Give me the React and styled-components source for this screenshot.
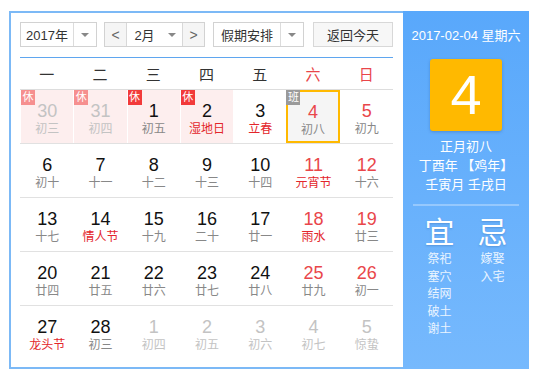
import React from "react";
import styled, { createGlobalStyle } from "styled-components";

const GlobalStyle = createGlobalStyle`
  body {
    margin: 0;
    background: #fff;
    font-family: "Liberation Sans", "Noto Sans CJK SC", sans-serif;
  }
`;

const Frame = styled.div`
  margin: 11px 0 0 9px;
  width: 520px;
  height: 358px;
  box-sizing: border-box;
  border: 2px solid #7cb9f6;
  border-right: none;
  display: flex;
`;

const Main = styled.div`
  width: 392px;
  box-sizing: border-box;
  padding: 9px 10px 0 9px;
  background: #fff;
`;

const Toolbar = styled.div`
  display: flex;
  height: 25px;
  padding-bottom: 10px;
  border-bottom: 1px solid #5fa6ef;
`;

const Select = styled.div`
  display: flex;
  width: ${({ w }) => w}px;
  margin-right: ${({ gap }) => gap || 0}px;
  box-sizing: border-box;
  border: 1px solid #d2d2d2;
  background: #fff;
  font-size: 13px;
  color: #333;
`;

const SelectText = styled.div`
  flex: 1;
  display: flex;
  align-items: center;
  justify-content: center;
`;

const Arrow = styled.div`
  width: 22px;
  border-left: 1px solid #dcdcdc;
  display: flex;
  align-items: center;
  justify-content: center;
  &::after {
    content: "";
    border-left: 4px solid transparent;
    border-right: 4px solid transparent;
    border-top: 4px solid #888;
  }
`;

const Group = styled.div`
  display: flex;
  width: 101px;
  margin-right: 8px;
  box-sizing: border-box;
  border: 1px solid #d2d2d2;
  font-size: 13px;
  color: #333;
`;

const Step = styled.div`
  width: 21px;
  background: #f5f5f5;
  display: flex;
  align-items: center;
  justify-content: center;
  color: #666;
  font-size: 14px;
  ${({ side }) => (side === "l" ? "border-right" : "border-left")}: 1px solid #d8d8d8;
`;

const MonthBox = styled.div`
  flex: 1;
  display: flex;
  background: #fff;
`;

const MonthArrow = styled(Arrow)`
  border-left: none;
  width: 20px;
`;

const TodayBtn = styled.div`
  width: 80px;
  box-sizing: border-box;
  border: 1px solid #d8d8d8;
  background: #f7f7f7;
  display: flex;
  align-items: center;
  justify-content: center;
  font-size: 13px;
  color: #333;
`;

const Head = styled.div`
  display: grid;
  grid-template-columns: repeat(7, 1fr);
  height: 31px;
  border-bottom: 1px solid #ddd;
`;

const HeadCell = styled.div`
  display: flex;
  align-items: center;
  justify-content: center;
  font-size: 15px;
  color: ${({ red }) => (red ? "#e9464a" : "#333")};
`;

const Week = styled.div`
  display: grid;
  grid-template-columns: repeat(7, 1fr);
  height: 53px;
  border-bottom: ${({ last }) => (last ? "none" : "1px solid #e1e1e1")};
`;

const Cell = styled.div`
  position: relative;
  box-sizing: border-box;
  border-left: 1px solid #fff;
  padding-top: ${({ today }) => (today ? 10 : 11)}px;
  text-align: center;
  background: ${({ rest, today }) => (today ? "#f5f5f5" : rest ? "#fdeeee" : "#fff")};
  border: ${({ today }) => (today ? "2px solid #ffb900" : "")};
`;

const Num = styled.div`
  font-size: 18px;
  line-height: 20px;
  color: ${({ c }) => c};
`;

const Lunar = styled.div`
  font-size: 12px;
  line-height: 16px;
  color: ${({ c }) => c};
`;

const Badge = styled.span`
  position: absolute;
  top: ${({ inset }) => (inset ? -2 : 0)}px;
  left: ${({ inset }) => (inset ? -2 : 0)}px;
  width: 14px;
  height: 15px;
  line-height: 15px;
  font-size: 11px;
  color: #fff;
  text-align: center;
  background: ${({ bg }) => bg};
`;

const Side = styled.div`
  width: 126px;
  margin: -2px 0;
  background: linear-gradient(#59a8fb, #76b9fd);
  color: #fff;
  display: flex;
  flex-direction: column;
  align-items: center;
  padding-top: 16px;
  font-family: "Liberation Sans", "Noto Sans CJK SC", sans-serif;
`;

const DateLine = styled.div`
  font-size: 13px;
  line-height: 18px;
`;

const DayBox = styled.div`
  width: 72px;
  height: 72px;
  margin-top: 14px;
  border-radius: 3px;
  background: #ffb900;
  box-shadow: 0 1px 3px rgba(40, 80, 140, 0.35);
  display: flex;
  align-items: center;
  justify-content: center;
  font-size: 56px;
  line-height: 1;
`;

const LunarInfo = styled.div`
  margin-top: 6px;
  font-size: 13px;
  line-height: 19px;
  text-align: center;
`;

const Divider = styled.div`
  align-self: stretch;
  margin: 10px 10px 0;
  height: 2px;
  background: rgba(255, 255, 255, 0.3);
`;

const Advice = styled.div`
  display: flex;
  gap: 13px;
  margin-top: 9px;
`;

const AdviceCol = styled.div`
  width: 40px;
  display: flex;
  flex-direction: column;
  align-items: center;
`;

const AdviceTitle = styled.div`
  font-size: 30px;
  line-height: 36px;
  text-shadow: 0 1px 2px rgba(30, 80, 150, 0.3);
`;

const AdviceItem = styled.div`
  font-size: 12px;
  line-height: 17.5px;
  color: #eaf4ff;
`;

const weeks = [
  [
    { n: 30, l: "初三", o: 1, b: "休" },
    { n: 31, l: "初四", o: 1, b: "休" },
    { n: 1, l: "初五", b: "休" },
    { n: 2, l: "湿地日", f: 1, b: "休" },
    { n: 3, l: "立春", f: 1 },
    { n: 4, l: "初八", t: 1, b: "班" },
    { n: 5, l: "初九" },
  ],
  [
    { n: 6, l: "初十" },
    { n: 7, l: "十一" },
    { n: 8, l: "十二" },
    { n: 9, l: "十三" },
    { n: 10, l: "十四" },
    { n: 11, l: "元宵节", f: 1 },
    { n: 12, l: "十六" },
  ],
  [
    { n: 13, l: "十七" },
    { n: 14, l: "情人节", f: 1 },
    { n: 15, l: "十九" },
    { n: 16, l: "二十" },
    { n: 17, l: "廿一" },
    { n: 18, l: "雨水", f: 1 },
    { n: 19, l: "廿三" },
  ],
  [
    { n: 20, l: "廿四" },
    { n: 21, l: "廿五" },
    { n: 22, l: "廿六" },
    { n: 23, l: "廿七" },
    { n: 24, l: "廿八" },
    { n: 25, l: "廿九" },
    { n: 26, l: "初一" },
  ],
  [
    { n: 27, l: "龙头节", f: 1 },
    { n: 28, l: "初三" },
    { n: 1, l: "初四", o: 1 },
    { n: 2, l: "初五", o: 1 },
    { n: 3, l: "初六", o: 1 },
    { n: 4, l: "初七", o: 1 },
    { n: 5, l: "惊蛰", o: 1 },
  ],
];

const heads = ["一", "二", "三", "四", "五", "六", "日"];

const DayCell = ({ d, col }) => {
  const weekend = col >= 5;
  const numColor = d.o ? "#c3c3c3" : weekend ? "#e9464a" : "#111";
  const lunarColor = d.o ? "#c3c3c3" : d.f ? "#e3262b" : "#888";
  const badgeBg = d.b === "班" ? "#9a9a9a" : d.o ? "#f68f8f" : "#f23a3a";
  return (
    <Cell rest={d.b === "休"} today={d.t}>
      {d.b && (
        <Badge bg={badgeBg} inset={d.t}>
          {d.b}
        </Badge>
      )}
      <Num c={numColor}>{d.n}</Num>
      <Lunar c={lunarColor}>{d.l}</Lunar>
    </Cell>
  );
};

export default function App() {
  return (
    <>
      <GlobalStyle />
      <Frame>
        <Main>
          <Toolbar>
            <Select w={77} gap={7}>
              <SelectText>2017年</SelectText>
              <Arrow />
            </Select>
            <Group>
              <Step side="l">&lt;</Step>
              <MonthBox>
                <SelectText>2月</SelectText>
                <MonthArrow />
              </MonthBox>
              <Step side="r">&gt;</Step>
            </Group>
            <Select w={91} gap={9}>
              <SelectText>假期安排</SelectText>
              <Arrow />
            </Select>
            <TodayBtn>返回今天</TodayBtn>
          </Toolbar>
          <Head>
            {heads.map((h, i) => (
              <HeadCell key={h} red={i >= 5}>
                {h}
              </HeadCell>
            ))}
          </Head>
          {weeks.map((w, i) => (
            <Week key={i} last={i === weeks.length - 1}>
              {w.map((d, j) => (
                <DayCell key={j} d={d} col={j} />
              ))}
            </Week>
          ))}
        </Main>
        <Side>
          <DateLine>2017-02-04 星期六</DateLine>
          <DayBox>4</DayBox>
          <LunarInfo>
            正月初八
            <br />
            丁酉年 【鸡年】
            <br />
            壬寅月 壬戌日
          </LunarInfo>
          <Divider />
          <Advice>
            <AdviceCol>
              <AdviceTitle>宜</AdviceTitle>
              {["祭祀", "塞穴", "结网", "破土", "谢土"].map((t) => (
                <AdviceItem key={t}>{t}</AdviceItem>
              ))}
            </AdviceCol>
            <AdviceCol>
              <AdviceTitle>忌</AdviceTitle>
              {["嫁娶", "入宅"].map((t) => (
                <AdviceItem key={t}>{t}</AdviceItem>
              ))}
            </AdviceCol>
          </Advice>
        </Side>
      </Frame>
    </>
  );
}
